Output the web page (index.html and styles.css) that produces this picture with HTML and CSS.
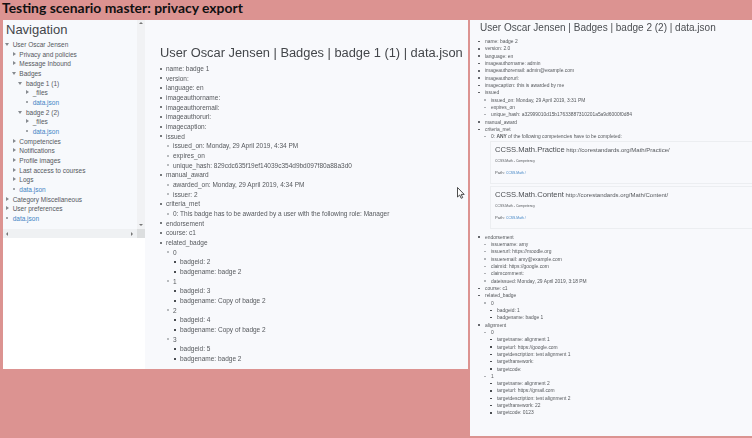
FILE: index.html
```html
<!DOCTYPE html>
<html lang="en">
<head>
<meta charset="utf-8">
<title>Testing scenario master: privacy export</title>
<link rel="stylesheet" href="styles.css">
</head>
<body>
<h1 class="slide-title">Testing scenario master: privacy export</h1>
<div class="desktop">
  <section class="win win-left">
    <aside class="nav-col">
      <div class="nav-box">
        <div class="nav-scroll">
          <h2 class="nav-title">Navigation</h2>
          <ul class="tree">
            <li class="open">User Oscar Jensen
              <ul class="tree">
                <li class="closed">Privacy and policies</li>
                <li class="closed">Message Inbound</li>
                <li class="open">Badges
                  <ul class="tree">
                    <li class="open">badge 1 (1)
                      <ul class="tree">
                        <li class="closed">_files</li>
                        <li class="leaf"><a href="#">data.json</a></li>
                      </ul>
                    </li>
                    <li class="open">badge 2 (2)
                      <ul class="tree">
                        <li class="closed">_files</li>
                        <li class="leaf"><a href="#">data.json</a></li>
                      </ul>
                    </li>
                  </ul>
                </li>
                <li class="closed">Competencies</li>
                <li class="closed">Notifications</li>
                <li class="closed">Profile images</li>
                <li class="closed">Last access to courses</li>
                <li class="closed">Logs</li>
                <li class="leaf"><a href="#">data.json</a></li>
              </ul>
            </li>
            <li class="closed">Category Miscellaneous</li>
            <li class="closed">User preferences</li>
            <li class="leaf"><a href="#">data.json</a></li>
          </ul>
        </div>
        <div class="vbar"><span class="arr-up"></span><span class="arr-down"></span></div>
      </div>
      <div class="hbar"><span class="arr-left"></span><span class="arr-right"></span><span class="corner"></span></div>
    </aside>
    <main class="main">
      <h2 class="main-title">User Oscar Jensen | Badges | badge 1 (1) | data.json</h2>
      <ul class="data">
        <li>name: badge 1</li>
        <li>version:</li>
        <li>language: en</li>
        <li>imageauthorname:</li>
        <li>imageauthoremail:</li>
        <li>imageauthorurl:</li>
        <li>imagecaption:</li>
        <li>issued
          <ul>
            <li>issued_on: Monday, 29 April 2019, 4:34 PM</li>
            <li>expires_on</li>
            <li>unique_hash: 829cdc635f19ef14039c354d9bd097f80a88a3d0</li>
          </ul>
        </li>
        <li>manual_award
          <ul>
            <li>awarded_on: Monday, 29 April 2019, 4:34 PM</li>
            <li>issuer: 2</li>
          </ul>
        </li>
        <li>criteria_met
          <ul><li>0: This badge has to be awarded by a user with the following role: Manager</li></ul>
        </li>
        <li>endorsement</li>
        <li>course: c1</li>
        <li>related_badge
          <ul>
            <li>0<ul><li>badgeid: 2</li><li>badgename: badge 2</li></ul></li>
            <li>1<ul><li>badgeid: 3</li><li>badgename: Copy of badge 2</li></ul></li>
            <li>2<ul><li>badgeid: 4</li><li>badgename: Copy of badge 2</li></ul></li>
            <li>3<ul><li>badgeid: 5</li><li>badgename: badge 2</li></ul></li>
          </ul>
        </li>
      </ul>
    </main>
  </section>
  <section class="win win-right">
    <h2 class="right-title">User Oscar Jensen | Badges | badge 2 (2) | data.json</h2>
    <ul class="data data-small">
      <li>name: badge 2</li>
      <li>version: 2.0</li>
      <li>language: en</li>
      <li>imageauthorname: admin</li>
      <li>imageauthoremail: admin@example.com</li>
      <li>imageauthorurl:</li>
      <li>imagecaption: this is awarded by me</li>
      <li>issued
        <ul>
          <li>issued_on: Monday, 29 April 2019, 3:31 PM</li>
          <li>expires_on</li>
          <li>unique_hash: a32999010d15b17633887310201a5a9d6000f0d84</li>
        </ul>
      </li>
      <li>manual_award</li>
      <li>criteria_met
        <ul>
          <li>0: <b>ANY</b> of the following competencies have to be completed:
            <div class="card">
              <p class="card-head"><span class="card-name">CCSS.Math.Practice</span> http://corestandards.org/Math/Practice/</p>
              <p class="card-sub">CCSS.Math - Competency</p>
              <p class="card-path">Path: <a href="#">CCSS.Math /</a></p>
            </div>
            <div class="card">
              <p class="card-head"><span class="card-name">CCSS.Math.Content</span> http://corestandards.org/Math/Content/</p>
              <p class="card-sub">CCSS.Math - Competency</p>
              <p class="card-path">Path: <a href="#">CCSS.Math /</a></p>
            </div>
          </li>
        </ul>
      </li>
      <li class="after-cards">endorsement
        <ul>
          <li>issuername: amy</li>
          <li>issuerurl: https://moodle.org</li>
          <li>issueremail: amy@example.com</li>
          <li>claimid: https://google.com</li>
          <li>claimcomment:</li>
          <li>dateissued: Monday, 29 April 2019, 3:18 PM</li>
        </ul>
      </li>
      <li>course: c1</li>
      <li>related_badge
        <ul>
          <li>0<ul><li>badgeid: 1</li><li>badgename: badge 1</li></ul></li>
        </ul>
      </li>
      <li>alignment
        <ul>
          <li>0<ul>
            <li>targetname: alignment 1</li>
            <li>targeturl: https://google.com</li>
            <li>targetdescription: test alignment 1</li>
            <li>targetframework:</li>
            <li>targetcode:</li>
          </ul></li>
          <li>1<ul>
            <li>targetname: alignment 2</li>
            <li>targeturl: https://gmail.com</li>
            <li>targetdescription: test alignment 2</li>
            <li>targetframework: 22</li>
            <li>targetcode: 0123</li>
          </ul></li>
        </ul>
      </li>
    </ul>
  </section>
  <svg class="cursor" width="8" height="12" viewBox="0 0 8 12"><path d="M.5.5v9.5l2.2-2 1.5 3.3 1.5-.7-1.5-3.2h3z" fill="#fff" stroke="#222" stroke-width=".8"/></svg>
</div>
</body>
</html>
```
FILE: styles.css
```css
html, body { margin: 0; padding: 0; }
body {
  width: 752px;
  height: 438px;
  overflow: hidden;
  background: #dc9391;
  font-family: "Liberation Sans", Arial, sans-serif;
  color: #55585c;
}
ul { margin: 0; padding: 0; }
h1, h2, p { margin: 0; font-weight: 400; }
a { color: #3f83c4; text-decoration: none; }

.slide-title {
  height: 20px;
  padding-left: 2px;
  font: 700 13.9px/15px Lato, sans-serif;
  color: #111;
  white-space: nowrap;
}

.desktop { position: relative; display: flex; gap: 2px; padding-left: 3px; align-items: flex-start; filter: blur(.3px); }

.win { background: #f8f9fc; }
.win-left { display: flex; width: 465px; height: 349px; }
.nav-col { width: 142px; background: #fff; flex: none; }
.nav-box { display: flex; height: 209px; background: #f7f9fc; }
.nav-scroll { flex: 1; padding: 1px 0 0 3px; overflow: hidden; }
.nav-title { font-size: 13px; line-height: 17px; margin-bottom: 2px; color: #43464a; }
.tree { list-style: none; font-size: 6.5px; line-height: 9.67px; }
.tree li { position: relative; padding-left: 6.67px; white-space: nowrap; }
.tree li::before { content: ""; position: absolute; }
.tree .closed::before {
  left: 0; top: 2px;
  border-left: 3px solid #85898e;
  border-top: 2.2px solid transparent;
  border-bottom: 2.2px solid transparent;
}
.tree .open::before {
  left: -1px; top: 3px;
  border-top: 3px solid #85898e;
  border-left: 2.2px solid transparent;
  border-right: 2.2px solid transparent;
}
.tree .leaf::before {
  left: 0; top: 3px; width: 2.4px; height: 2.4px;
  border-radius: 50%; background: #85898e;
}

.vbar { position: relative; width: 8px; background: #f1f2f4; flex: none; }
.hbar { position: relative; height: 9px; background: #eff1f3; }
.arr-up, .arr-down, .arr-left, .arr-right { position: absolute; }
.arr-up { left: 2px; top: 2px; border-bottom: 2px solid #777; border-left: 2px solid transparent; border-right: 2px solid transparent; }
.arr-down { left: 2px; bottom: 3px; border-top: 2px solid #777; border-left: 2px solid transparent; border-right: 2px solid transparent; }
.arr-left { left: 3px; top: 3px; border-right: 2px solid #777; border-top: 2px solid transparent; border-bottom: 2px solid transparent; }
.arr-right { right: 12px; top: 3px; border-left: 2px solid #777; border-top: 2px solid transparent; border-bottom: 2px solid transparent; }
.corner { position: absolute; right: 0; top: 0; width: 8px; height: 9px; background: #dcdedf; }

.main { flex: 1; margin-left: 2px; padding: 24px 0 0 13px; min-width: 0; }
.main-title { font-size: 12.85px; line-height: 17px; margin-bottom: 3px; white-space: nowrap; color: #43464a; }

.data, .data ul { list-style: none; }
.data { font-size: 6.5px; line-height: 9.67px; padding-left: 6px; white-space: nowrap; }
.data ul { padding-left: 7px; }
.data li { position: relative; }
.data li::before {
  content: "";
  position: absolute;
  left: -6px;
  top: 3.6px;
  width: 2px;
  height: 2px;
  border-radius: 50%;
  background: #4a4d51;
}
.data ul > li::before { background: #a4a7ab; }
.data ul ul > li::before { border-radius: 0; background: #4a4d51; }

.win-right { width: 282px; height: 416px; overflow: hidden; padding: 1px 0 0 10px; box-sizing: border-box; }
.right-title { font-size: 10px; line-height: 14px; margin-bottom: 3px; white-space: nowrap; color: #4b4e52; }
.data-small { font-size: 4.9px; line-height: 7.33px; padding-left: 5px; }
.data-small ul { padding-left: 6px; }
.data-small li::before { left: -7px; top: 2.7px; width: 1.5px; height: 1.5px; }

.card {
  background: #f8f9fc;
  border: 1px solid #eceef1;
  box-sizing: border-box;
  margin: 0 -20px 2px -1px;
  height: 43px;
  padding: 2px 0 0 4px;
}
.card-head { font-size: 6px; line-height: 11px; color: #55585c; }
.card-name { font-size: 7.6px; color: #4b4e52; }
.card-sub { font-size: 3.4px; line-height: 5px; margin-top: 3px; }
.card-path { font-size: 4.2px; line-height: 6px; margin-top: 6px; }
.card-path a { font-size: 3.4px; }
.after-cards { margin-top: 5px; }

.cursor { position: absolute; left: 457px; top: 167px; }
```
